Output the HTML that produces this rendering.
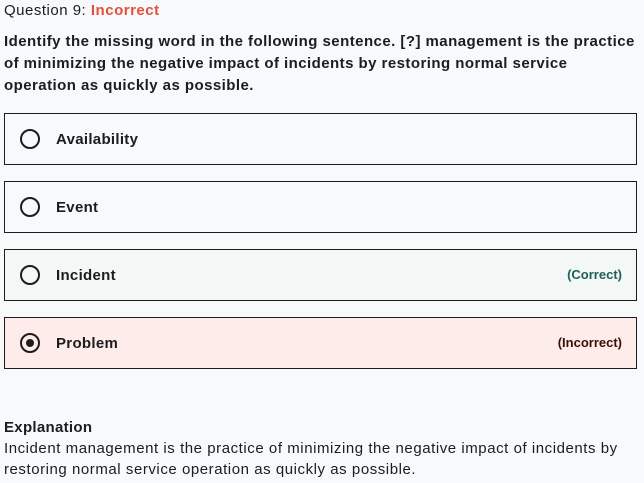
<!DOCTYPE html>
<html><head><style>
body{margin:0;background:#f8f9fa;font-family:"Liberation Sans",sans-serif;color:#1c1d1f;width:644px;height:483px;overflow:hidden;position:relative}
.t{position:absolute;left:4px;top:2px;font-size:15px;letter-spacing:0.5px}
.t b{color:#e4513b}
.q{position:absolute;left:4px;top:31px;width:640px;font-size:15px;font-weight:bold;line-height:22px;letter-spacing:0.45px}
.o{position:absolute;left:4px;width:631px;height:50px;border:1px solid #1c1d1f;font-weight:bold;font-size:15px;letter-spacing:0.3px}
.o .r{position:absolute;left:15px;top:15px;width:20px;height:20px;border:2px solid #1c1d1f;border-radius:50%;box-sizing:border-box}
.o .r i{position:absolute;left:4px;top:4px;width:8px;height:8px;background:#1c1d1f;border-radius:50%}
.o span{position:absolute;left:51px;top:17px}
.o em{position:absolute;right:14px;top:17px;font-style:normal;font-size:13px;letter-spacing:0}
.e{position:absolute;left:4px;top:417px;font-size:15px;line-height:21px;width:640px;letter-spacing:0.55px}
</style></head><body>
<div class="t">Question 9: <b>Incorrect</b></div>
<div class="q">Identify the missing word in the following sentence. [?] management is the practice of minimizing the negative impact of incidents by restoring normal service operation as quickly as possible.</div>
<div class="o" style="top:113px"><div class="r"></div><span>Availability</span></div>
<div class="o" style="top:181px"><div class="r"></div><span>Event</span></div>
<div class="o" style="top:249px;background:#f3f7f5"><div class="r"></div><span>Incident</span><em style="color:#1e5f5a">(Correct)</em></div>
<div class="o" style="top:317px;background:#fdece9"><div class="r"><i></i></div><span>Problem</span><em style="color:#3d0e0a">(Incorrect)</em></div>
<div class="e"><b style="letter-spacing:0.3px">Explanation</b><br>Incident management is the practice of minimizing the negative impact of incidents by<br>restoring normal service operation as quickly as possible.</div>
</body></html>
